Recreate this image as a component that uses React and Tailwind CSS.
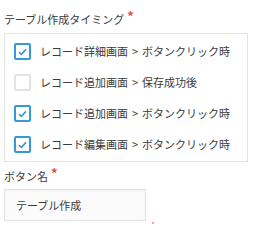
import React from "react";

const rows = [
  { a: "レコード詳細画面", b: "ボタンクリック時", checked: true },
  { a: "レコード追加画面", b: "保存成功後", checked: false },
  { a: "レコード追加画面", b: "ボタンクリック時", checked: true },
  { a: "レコード編集画面", b: "ボタンクリック時", checked: true },
];

function Box({ checked }) {
  return (
    <span
      className={
        "flex h-[17px] w-[17px] shrink-0 items-center justify-center rounded-[2px] border-2 bg-white " +
        (checked ? "border-[#3498db]" : "border-[#e3e3e3]")
      }
    >
      {checked && (
        <svg width="9" height="8" viewBox="0 0 9 8">
          <path d="M1 4.2 L3.4 6.4 L8 1.4" fill="none" stroke="#3498db" strokeWidth="1.6" />
        </svg>
      )}
    </span>
  );
}

function Req() {
  return (
    <span className="ml-[3px] -mt-[2px] text-[13px] font-bold leading-[13px] text-[#e74c3c]">*</span>
  );
}

export default function App() {
  return (
    <div
      className="w-[254px] h-[226px] overflow-hidden bg-white pl-[4px] pt-[11px] text-[#3a3a3a]"
      style={{ fontFamily: '"Noto Sans CJK JP", "Noto Sans", sans-serif' }}
    >
      <div className="flex items-start text-[11px] leading-[16px]">
        <span>テーブル作成タイミング</span>
        <Req />
      </div>
      <div className="mt-[6px] flex w-[244px] flex-col gap-[14px] border border-[#e3e3e3] pb-[8px] pl-[9px] pt-[9px]">
        {rows.map((r, i) => (
          <div key={i} className="flex h-[17px] items-center gap-[9px] text-[11px]">
            <Box checked={r.checked} />
            <span className="flex items-center">
              {r.a}
              <span className="mx-[4px]">&gt;</span>
              {r.b}
            </span>
          </div>
        ))}
      </div>
      <div className="mt-[6px] flex items-start text-[11px] leading-[16px]">
        <span>ボタン名</span>
        <Req />
      </div>
      <div className="mt-[5px] flex items-end">
        <div className="flex h-[32px] w-[142px] items-center border border-[#e3e3e3] bg-[#fbfbfb] pl-[11px] text-[11px] shadow-[inset_0_1px_2px_rgba(0,0,0,0.04)]">
          テーブル作成
        </div>
        <span className="ml-[6px] mb-[-3px] h-[2px] w-[2px] rounded-full bg-[#f08080]" />
      </div>
    </div>
  );
}
